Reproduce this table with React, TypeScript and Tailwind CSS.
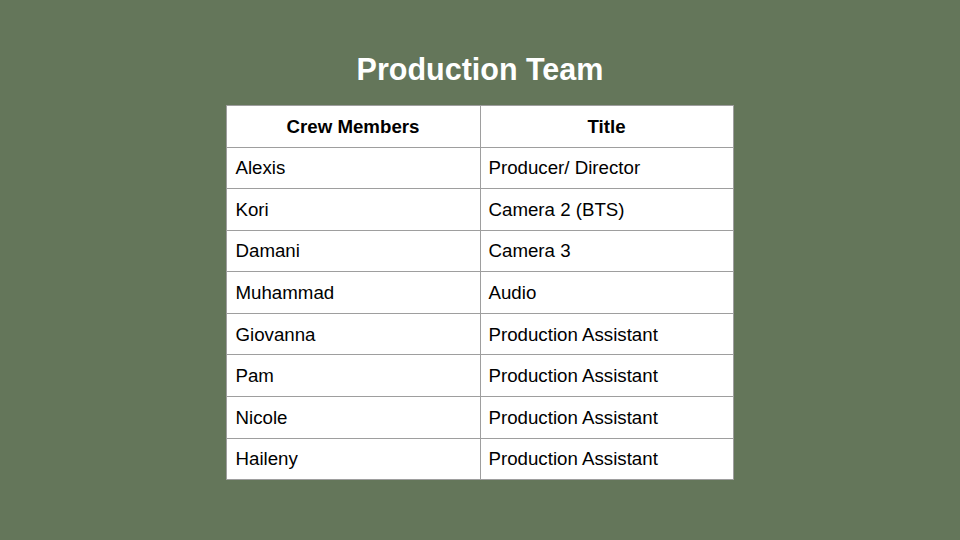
const rows: [string, string][] = [
  ["Alexis", "Producer/ Director"],
  ["Kori", "Camera 2 (BTS)"],
  ["Damani", "Camera 3"],
  ["Muhammad", "Audio"],
  ["Giovanna", "Production Assistant"],
  ["Pam", "Production Assistant"],
  ["Nicole", "Production Assistant"],
  ["Haileny", "Production Assistant"],
];

const App = () => {
  return (
    <div
      className="w-[960px] h-[540px] bg-[#64765a] flex flex-col items-center"
      style={{ fontFamily: '"Liberation Sans", Arial, sans-serif' }}
    >
      <h1 className="mt-[49px] h-[40px] text-[30.5px] leading-[40px] font-bold text-white">
        Production Team
      </h1>
      <table className="mt-[16px] ml-[-1px] border-collapse bg-white text-black text-[18.7px]">
        <thead>
          <tr className="h-[41.5px]">
            <th className="w-[254px] border border-[#9e9e9e] font-bold text-center pt-[1px]">Crew Members</th>
            <th className="w-[253px] border border-[#9e9e9e] font-bold text-center pt-[1px]">Title</th>
          </tr>
        </thead>
        <tbody>
          {rows.map(([name, title]) => (
            <tr className="h-[41.6px]" key={name}>
              <td className="border border-[#9e9e9e] pl-[9px] pt-[1px]">{name}</td>
              <td className="border border-[#9e9e9e] pl-[8px] pt-[1px]">{title}</td>
            </tr>
          ))}
        </tbody>
      </table>
    </div>
  );
};

export default App;
